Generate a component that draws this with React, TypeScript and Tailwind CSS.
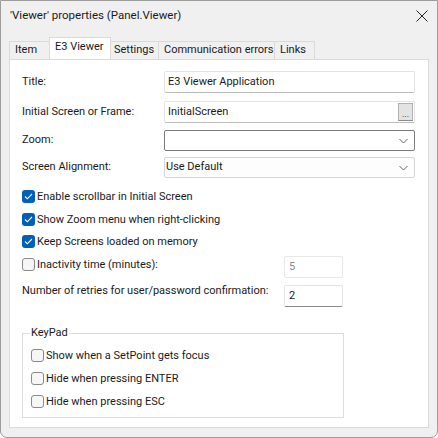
import React from "react";

const font = { fontFamily: 'Roboto, "Noto Sans", sans-serif' };

function Chevron() {
  return (
    <svg width="9" height="5" viewBox="0 0 9 5" className="absolute right-[6px] top-1/2 -translate-y-1/2">
      <path d="M0.5 0.5 L4.5 4.5 L8.5 0.5" fill="none" stroke="#606060" strokeWidth="1" />
    </svg>
  );
}

function Check({ checked }: { checked: boolean }) {
  if (checked) {
    return (
      <span className="w-[13px] h-[13px] rounded-[3px] bg-[#005fb8] flex items-center justify-center shrink-0">
        <svg width="9" height="7" viewBox="0 0 9 7">
          <path d="M1 3.5 L3.3 5.8 L8 1" fill="none" stroke="white" strokeWidth="1.1" />
        </svg>
      </span>
    );
  }
  return <span className="w-[13px] h-[13px] rounded-[3px] border border-[#8a8a8a] bg-[#f6f6f6] shrink-0" />;
}

function CheckRow({ checked, label, cls }: { checked: boolean; label: string; cls: string }) {
  return (
    <div className={"flex items-center gap-[2px] h-[16px] whitespace-nowrap " + cls}>
      <Check checked={checked} />
      <span className="leading-none">{label}</span>
    </div>
  );
}

export default function App() {
  return (
    <div
      style={font}
      className="w-[438px] h-[438px] bg-[#f0f0f0] border border-[#9c9c9c] rounded-b-[7px] text-[11.5px] text-[#1a1a1a] flex flex-col overflow-hidden whitespace-nowrap"
    >
      <div className="h-[30px] flex items-center justify-between pl-[9px] pr-[9px] shrink-0 text-[12px]">
        <span className="text-[11.5px]">'Viewer' properties (Panel.Viewer)</span>
        <svg width="12" height="12" viewBox="0 0 12 12">
          <path d="M0.5 0.5 L11.5 11.5 M11.5 0.5 L0.5 11.5" stroke="#222" strokeWidth="1" />
        </svg>
      </div>
      <div className="flex items-end h-[28px] ml-[8px] shrink-0 text-[11px]">
        <div className="h-[18px] px-[5px] border border-b-0 border-[#dadada] bg-[#f0f0f0] flex items-center w-[41px]">Item</div>
        <div className="h-[22px] px-[5px] border border-b-0 border-[#dadada] bg-white flex items-center pb-[3px] w-[62px] -mx-px relative z-10">E3 Viewer</div>
        <div className="h-[18px] px-[4px] border border-b-0 border-l-0 border-[#dadada] bg-[#f0f0f0] flex items-center w-[49px]">Settings</div>
        <div className="h-[18px] px-[5px] border border-b-0 border-l-0 border-[#dadada] bg-[#f0f0f0] flex items-center w-[116px]">Communication errors</div>
        <div className="h-[18px] px-[5px] border border-b-0 border-l-0 border-[#dadada] bg-[#f0f0f0] flex items-center w-[40px]">Links</div>
      </div>
      <div className="mx-[8px] h-[369px] bg-white border border-[#dadada] pl-[12px] pt-[11px] relative text-[11px]">
        <div className="flex items-center h-[22px]">
          <span className="w-[142px]">Title:</span>
          <div className="w-[251px] h-[22px] border border-[#e3e3e3] border-b-[#bdbdbd] rounded-[2px] flex items-center pl-[3px]">E3 Viewer Application</div>
        </div>
        <div className="flex items-center h-[22px] mt-[8px]">
          <span className="w-[142px]">Initial Screen or Frame:</span>
          <div className="w-[251px] h-[22px] border border-[#e3e3e3] border-b-[#bdbdbd] rounded-[2px] flex items-center justify-between pl-[3px] pr-[1px]">
            <span>InitialScreen</span>
            <span className="w-[15px] h-[18px] bg-[#e3e3e3] border border-[#b0b0b0] border-b-[#8a8a8a] flex items-end justify-center text-[9px] leading-[12px]">...</span>
          </div>
        </div>
        <div className="flex items-center h-[21px] mt-[7px]">
          <span className="w-[142px]">Zoom:</span>
          <div className="w-[251px] h-[21px] border border-[#7a7a7a] rounded-[2px] relative">
            <Chevron />
          </div>
        </div>
        <div className="flex items-center h-[21px] mt-[6px]">
          <span className="w-[142px]">Screen Alignment:</span>
          <div className="w-[251px] h-[21px] border border-[#d6d6d6] bg-[#fdfdfd] rounded-[2px] relative flex items-center pl-[1px]">
            Use Default
            <Chevron />
          </div>
        </div>
        <CheckRow checked label="Enable scrollbar in Initial Screen" cls="mt-[10px]" />
        <CheckRow checked label="Show Zoom menu when right-clicking" cls="mt-[7px]" />
        <CheckRow checked label="Keep Screens loaded on memory" cls="mt-[6px]" />
        <div className="flex items-center h-[22px] mt-[7px]">
          <div className="w-[262px] flex items-center gap-[2px] -mt-[6px]">
            <Check checked={false} />
            <span className="leading-none">Inactivity time (minutes):</span>
          </div>
          <div className="w-[59px] h-[22px] border border-[#e8e8e8] rounded-[2px] flex items-center pl-[4px] text-[#8a8a8a]">5</div>
        </div>
        <div className="flex items-center h-[22px] mt-[7px]">
          <span className="w-[262px] -mt-[10px]">Number of retries for user/password confirmation:</span>
          <div className="w-[59px] h-[22px] border border-[#e3e3e3] border-b-[#8a8a8a] rounded-[2px] flex items-center pl-[4px]">2</div>
        </div>
        <div className="relative mt-[26px] w-[322px] h-[85px] border border-[#dcdcdc] pl-[8px] pt-[13px]">
          <span className="absolute left-[7px] -top-[9px] bg-white px-[1px] leading-[16px]">KeyPad</span>
          <CheckRow checked={false} label="Show when a SetPoint gets focus" cls="" />
          <CheckRow checked={false} label="Hide when pressing ENTER" cls="mt-[7px]" />
          <CheckRow checked={false} label="Hide when pressing ESC" cls="mt-[7px]" />
        </div>
      </div>
    </div>
  );
}
